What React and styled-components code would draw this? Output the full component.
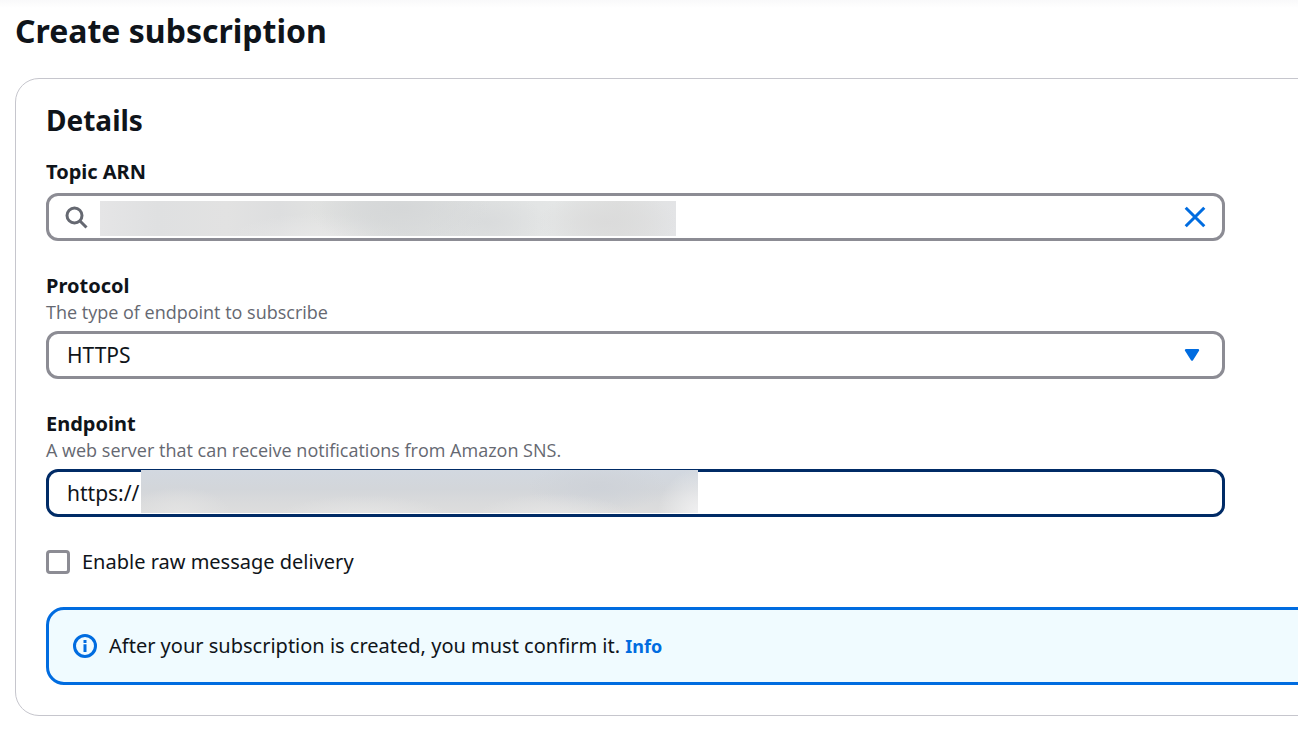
import React, { useState } from "react";
import styled, { createGlobalStyle, css } from "styled-components";

const color = {
  text: "#0f141a",
  muted: "#656871",
  control: "#8c8c94",
  focus: "#002b66",
  accent: "#006ce0",
  divider: "#c6c6cd",
  infoBackground: "#f0fbff",
};

const GlobalStyle = createGlobalStyle`
  *, *::before, *::after { box-sizing: border-box; }
  body {
    margin: 0;
    overflow: hidden;
    background: #fff;
    color: ${color.text};
    font-family: "Noto Sans", "Open Sans", sans-serif;
    font-size: 20px;
    line-height: 30px;
  }
`;

const Page = styled.main`
  padding: 0 0 15px 15px;
`;

const TopShade = styled.div`
  height: 8px;
  margin-left: -15px;
  background: linear-gradient(#f9f9fa, #fff);
`;

const Title = styled.h1`
  margin: 0 0 24px;
  font-size: 32px;
  line-height: 46px;
  font-weight: 700;
`;

const Card = styled.section`
  margin-right: -32px;
  padding: 24px 0 30px 30px;
  border: 1px solid ${color.divider};
  border-radius: 24px;
`;

const CardTitle = styled.h2`
  margin: 0 0 20px;
  font-size: 28px;
  line-height: 34px;
  font-weight: 700;
`;

const Form = styled.form`
  display: flex;
  flex-direction: column;
  gap: 30px;
`;

const Field = styled.div`
  display: flex;
  flex-direction: column;
  margin-right: 104px;
`;

const Label = styled.label`
  font-weight: 700;
`;

const Description = styled.p`
  margin: 0 0 2px;
  color: ${color.muted};
  font-family: "Open Sans", "Noto Sans", sans-serif;
  font-size: 18px;
  line-height: 22px;
`;

const Box = styled.div`
  position: relative;
  display: flex;
  align-items: center;
  height: 48px;
  margin-top: 6px;
  border: 3px solid ${(p) => (p.$active ? color.focus : color.control)};
  border-radius: 12px;
  background: #fff;
`;

const controlText = css`
  flex: 1;
  min-width: 0;
  height: 100%;
  padding: 0 18px;
  border: 0;
  outline: 0;
  background: transparent;
  color: inherit;
  font: inherit;
  font-size: 21px;
`;

const TextInput = styled.input`
  ${controlText}
`;

const Select = styled.select`
  ${controlText}
  appearance: none;
`;

const SearchIcon = styled.svg`
  flex: none;
  margin-left: 15px;
`;

const ClearButton = styled.button`
  display: flex;
  margin-right: 15px;
  padding: 0;
  border: 0;
  background: none;
  cursor: pointer;
`;

const Caret = styled.svg`
  position: absolute;
  right: 21px;
  pointer-events: none;
`;

const redaction = css`
  position: absolute;
  pointer-events: none;
`;

const TopicRedaction = styled.span`
  ${redaction}
  left: 51px;
  top: 5px;
  width: 576px;
  height: 35px;
  background:
    radial-gradient(ellipse 90px 40px at 52% 20%, #d5d7d8, transparent),
    radial-gradient(ellipse 60px 30px at 67% 60%, #d9dbdc, transparent),
    radial-gradient(ellipse 70px 30px at 88% 60%, #dbdbdb, transparent),
    radial-gradient(ellipse 90px 26px at 38% 110%, #e8e8e8, transparent),
    linear-gradient(90deg, #e5e5e6, #dfe0e1 10%, #e2e2e2 22%, #dddedf 31%, #e1e2e1 38%, #dadcdc 48%, #dddfdf 60%, #e4e6e6 79%, #dedfde 90%, #e3e4e6);
`;

const EndpointRedaction = styled.span`
  ${redaction}
  left: 92px;
  top: -2px;
  width: 557px;
  height: 43px;
  background:
    radial-gradient(ellipse 50px 26px at 7% 100%, #e3e3e3, transparent),
    radial-gradient(ellipse 90px 24px at 40% 115%, #e6e6e6, transparent),
    radial-gradient(ellipse 80px 26px at 74% 115%, #e6e6e6, transparent),
    radial-gradient(ellipse 40px 44px at 100% 100%, #f0f0f1, transparent),
    radial-gradient(ellipse 70px 26px at 82% 40%, #ced2d8, transparent),
    linear-gradient(#d2d8e0, #d3d6da 45%, #dadbdc 80%, #dddddd);
`;

const CheckRow = styled.label`
  display: flex;
  align-items: center;
  gap: 12px;
`;

const Checkbox = styled.input`
  appearance: none;
  width: 24px;
  height: 24px;
  margin: 0;
  border: 3px solid ${color.control};
  border-radius: 4px;
  background: #fff;

  &:checked {
    border-color: ${color.accent};
    background: ${color.accent};
  }
`;

const Alert = styled.div`
  display: flex;
  align-items: center;
  gap: 12px;
  height: 78px;
  padding: 0 24px;
  border: 3px solid ${color.accent};
  border-radius: 18px;
  background: ${color.infoBackground};
`;

const InfoLink = styled.a`
  color: ${color.accent};
  font-size: 18px;
  font-weight: 700;
  text-decoration: none;
`;

export default function App() {
  const [topic, setTopic] = useState("");
  const [endpoint, setEndpoint] = useState("https://");
  const [raw, setRaw] = useState(false);

  return (
    <>
      <GlobalStyle />
      <Page>
        <TopShade />
        <Title>Create subscription</Title>
        <Card>
          <CardTitle>Details</CardTitle>
          <Form>
            <Field>
              <Label htmlFor="topic">Topic ARN</Label>
              <Box>
                <SearchIcon width="24" height="24" viewBox="0 0 24 24" fill="none" stroke={color.muted} strokeWidth="3" aria-hidden="true">
                  <circle cx="10.5" cy="10.5" r="7.5" />
                  <path d="M16 16 22.5 22.5" />
                </SearchIcon>
                <TextInput id="topic" value={topic} onChange={(e) => setTopic(e.target.value)} />
                <TopicRedaction />
                <ClearButton type="button" aria-label="Clear" onClick={() => setTopic("")}>
                  <svg width="24" height="24" viewBox="0 0 24 24" fill="none" stroke={color.accent} strokeWidth="3">
                    <path d="M2.7 2.7 21.3 21.3M21.3 2.7 2.7 21.3" />
                  </svg>
                </ClearButton>
              </Box>
            </Field>

            <Field>
              <Label htmlFor="protocol">Protocol</Label>
              <Description>The type of endpoint to subscribe</Description>
              <Box>
                <Select id="protocol" defaultValue="HTTPS">
                  <option>HTTPS</option>
                </Select>
                <Caret width="17" height="14" viewBox="0 0 17 14" aria-hidden="true">
                  <path d="M2 2.2H14L8 11.6Z" fill={color.accent} stroke={color.accent} strokeWidth="2.4" strokeLinejoin="round" />
                </Caret>
              </Box>
            </Field>

            <Field>
              <Label htmlFor="endpoint">Endpoint</Label>
              <Description>A web server that can receive notifications from Amazon SNS.</Description>
              <Box $active>
                <TextInput id="endpoint" value={endpoint} onChange={(e) => setEndpoint(e.target.value)} />
                <EndpointRedaction />
              </Box>
            </Field>

            <CheckRow>
              <Checkbox type="checkbox" checked={raw} onChange={(e) => setRaw(e.target.checked)} />
              Enable raw message delivery
            </CheckRow>

            <Alert>
              <svg width="24" height="24" viewBox="0 0 24 24" fill="none" stroke={color.accent} strokeWidth="3" aria-hidden="true">
                <circle cx="12" cy="12" r="10.5" />
                <path d="M12 10.2V18M12 6V9" />
              </svg>
              <span>
                After your subscription is created, you must confirm it. <InfoLink href="#info">Info</InfoLink>
              </span>
            </Alert>
          </Form>
        </Card>
      </Page>
    </>
  );
}
